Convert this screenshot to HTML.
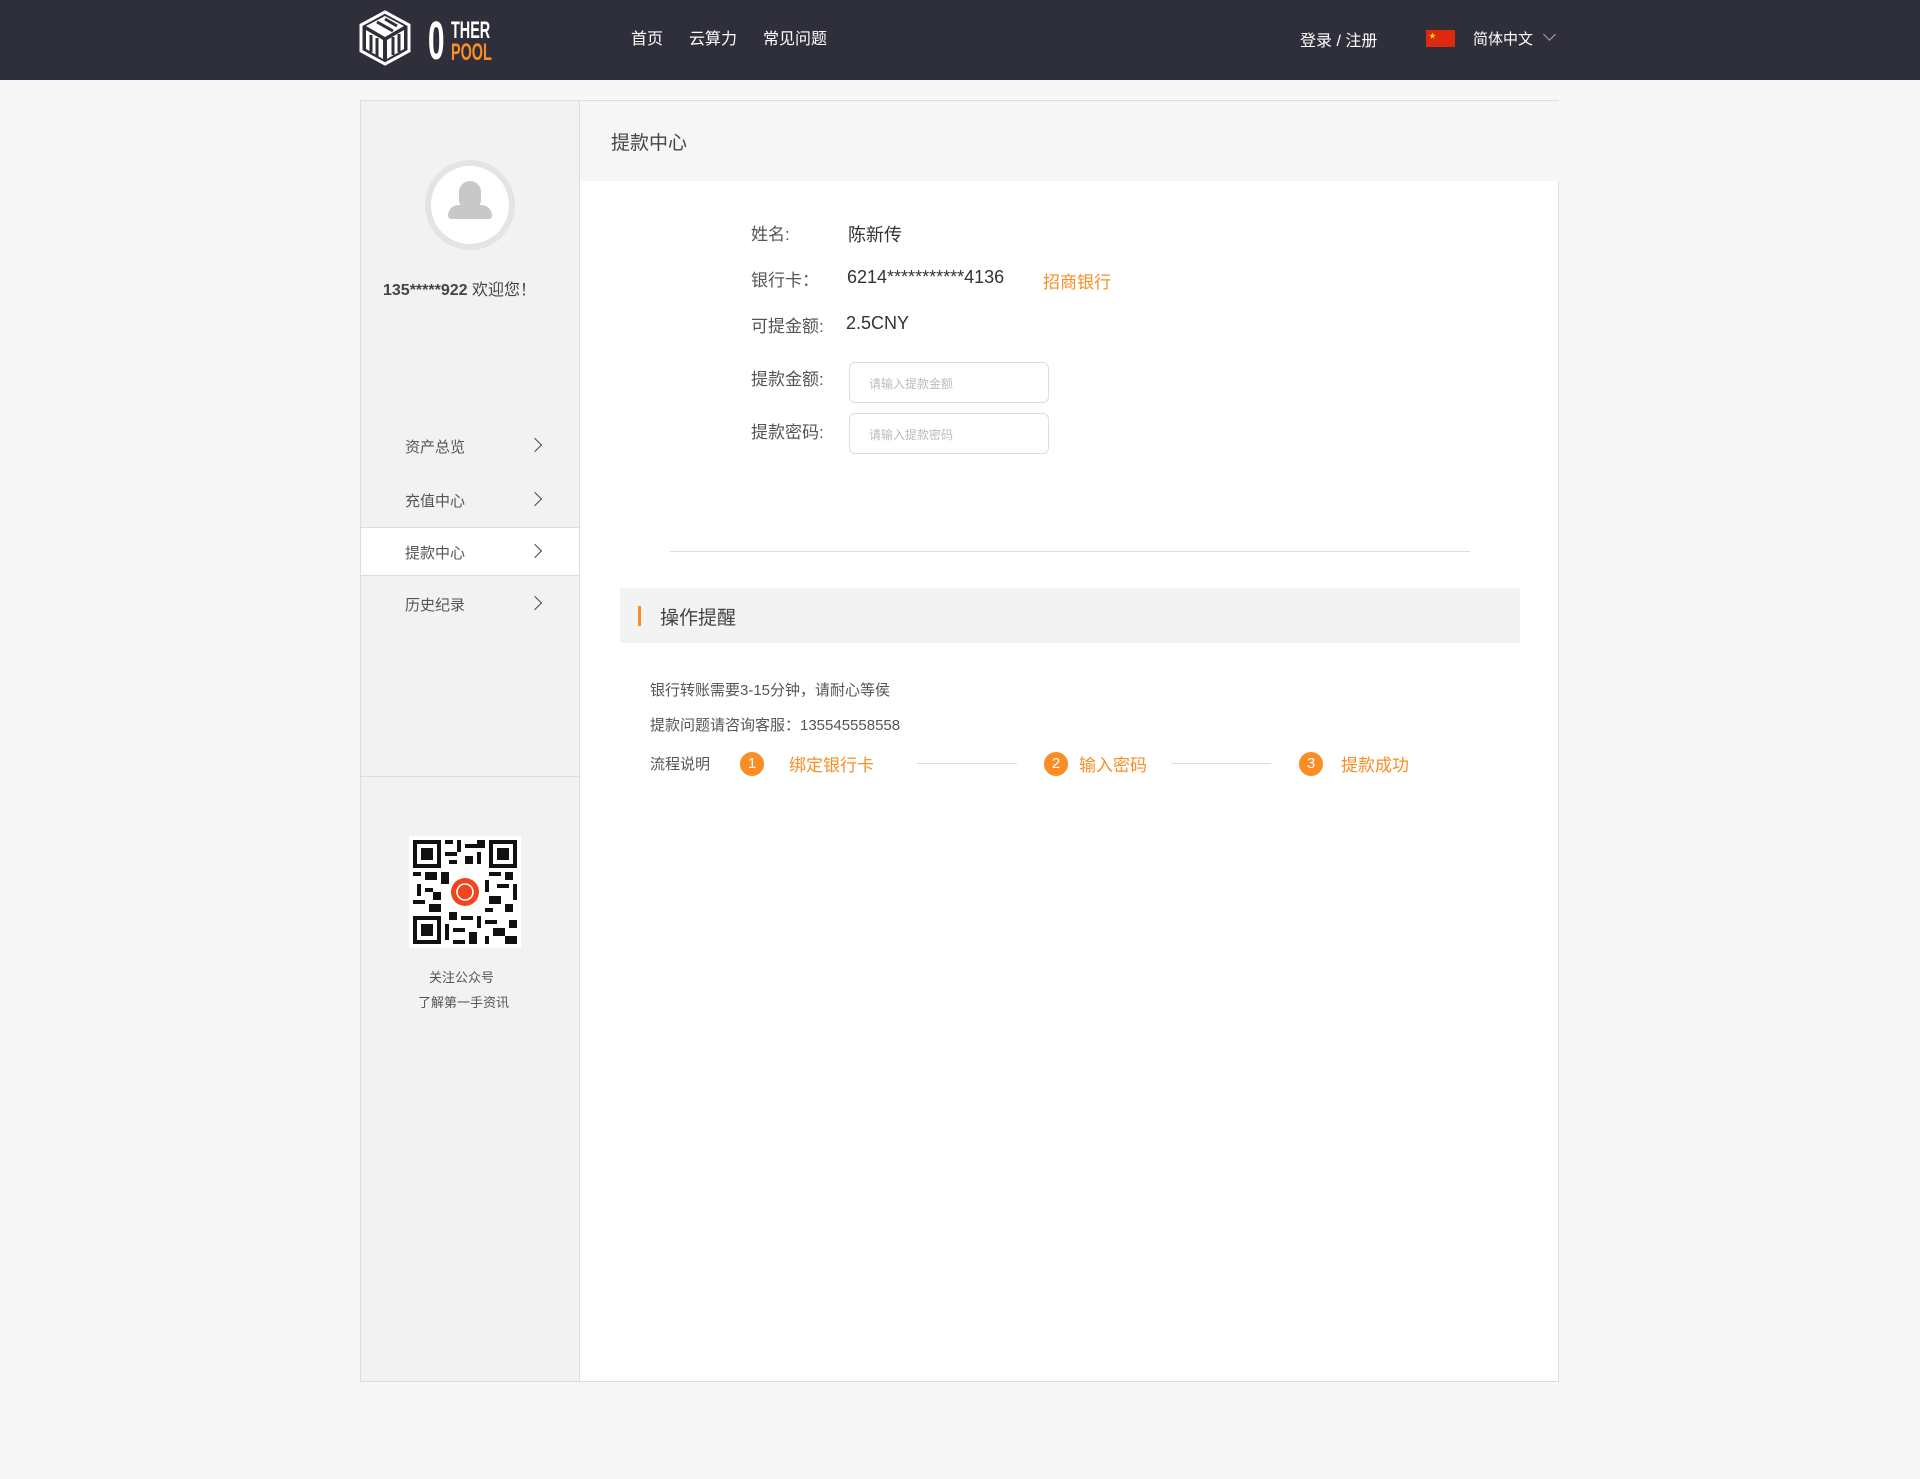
<!DOCTYPE html>
<html><head><meta charset="utf-8"><style>
*{margin:0;padding:0;box-sizing:border-box}
body{width:1920px;height:1479px;background:#f7f7f7;font-family:"Liberation Sans","Noto Sans CJK SC",sans-serif;position:relative;overflow:hidden;color:#333}
.a{position:absolute;white-space:nowrap}
.hdr{position:absolute;left:0;top:0;width:1920px;height:80px;background:#2e2f3a}
.nav{color:#fff;font-size:16px;top:25px}
.box{position:absolute;left:360px;top:100px;width:1199px;height:1282px;border:1px solid #ddd;background:#fff}
.side{position:absolute;left:0;top:0;width:219px;height:100%;background:#f2f2f2;border-right:1px solid #ddd}
.mi{position:absolute;left:0;width:218px;height:48px;font-size:15px;color:#555}
.mi span{position:absolute;left:44px;top:14px}
.mi i{position:absolute;left:169px;top:18px;width:10px;height:10px;border-top:1.5px solid #444;border-right:1.5px solid #444;transform:rotate(45deg)}
.lbl{font-size:17px;color:#555}
.val{font-size:18px;color:#333}
.inp{position:absolute;width:200px;height:41px;border:1px solid #ddd;border-radius:6px;background:#fff;font-size:12px;color:#bbb;padding:12px 0 0 19px}
.c{position:absolute;width:24px;height:24px;border-radius:50%;background:#f98e25;color:#fff;font-size:15px;text-align:center;line-height:24px}
.or{color:#f98e25;font-size:17px}
.ln{position:absolute;height:1px;background:#ddd;top:763px}
</style></head><body>
<div class="hdr"></div>
<svg class="a" style="left:357px;top:10px" width="56" height="56" viewBox="0 0 56 56"><path d="M28 2 L52 15 L52 41 L28 54 L4 41 L4 15Z" fill="none" stroke="#fff" stroke-width="3"/><path d="M28 6 L47 16 L28 27 L9 16Z" fill="#fff"/><path d="M9 20 L26 30 L26 49 L9 39Z" fill="#fff"/><path d="M30 30 L47 20 L47 39 L30 49Z" fill="#fff"/><path d="M20 12 L36 21 M28 9 L40 16 M14 25 L14 42 M20 28 L20 46 M36 27 L36 45 M42 24 L42 42" stroke="#2e2f3a" stroke-width="3"/></svg>
<div class="a" style="left:428px;top:14px;font:bold 54px/54px 'Liberation Sans Narrow','Liberation Sans',sans-serif;color:#fff;transform:scaleX(0.55);transform-origin:left">0</div>
<div class="a" style="left:451px;top:19px;font:bold 24px/24px 'Liberation Sans Narrow','Liberation Sans',sans-serif;color:#fff;transform:scaleX(0.6);transform-origin:left">THER</div>
<div class="a" style="left:451px;top:41px;font:bold 24px/24px 'Liberation Sans Narrow','Liberation Sans',sans-serif;color:#f98e25;transform:scaleX(0.6);transform-origin:left">POOL</div>
<div class="a nav" style="left:631px">首页</div>
<div class="a nav" style="left:689px">云算力</div>
<div class="a nav" style="left:763px">常见问题</div>
<div class="a nav" style="left:1300px;top:27px">登录 / 注册</div>
<div class="a" style="left:1426px;top:30px;width:29px;height:17px;background:#de2910"><span style="position:absolute;left:3px;top:1px;color:#ffde00;font-size:7px">★</span></div>
<div class="a nav" style="left:1473px;top:28px;font-size:15px">简体中文</div>
<div class="a" style="left:1545px;top:30px;width:9px;height:9px;border-right:1px solid #aaa;border-bottom:1px solid #aaa;transform:rotate(45deg)"></div>

<div class="box">
 <div class="side">
  <div class="a" style="left:64px;top:59px;width:90px;height:90px;border-radius:50%;background:#fff;border:6px solid #e4e4e4"></div>
  <div class="a" style="left:98px;top:80px;width:22px;height:28px;border-radius:11px 11px 9px 9px;background:#c8c8c8"></div>
  <div class="a" style="left:87px;top:104px;width:44px;height:14px;border-radius:12px 12px 4px 4px;background:#c8c8c8"></div>
  <div class="a" style="left:22px;top:175px;font-size:16px;color:#444"><b>135*****922</b> 欢迎您！</div>
  <div class="mi" style="top:321px"><span>资产总览</span><i></i></div>
  <div class="mi" style="top:375px"><span>充值中心</span><i></i></div>
  <div class="mi" style="top:426px;background:#fff;border-top:1px solid #ddd;border-bottom:1px solid #ddd;height:49px"><span style="top:14px">提款中心</span><i></i></div>
  <div class="mi" style="top:479px"><span>历史纪录</span><i></i></div>
  <div class="a" style="left:0;top:675px;width:218px;height:1px;background:#ddd"></div>
  <svg class="a" style="left:48px;top:735px" width="112" height="112" viewBox="0 0 28 28"><rect width="28" height="28" fill="#fff"/><g fill="#111">
  <path d="M1 1h7v7h-7zM2 2v5h5v-5zM3 3h3v3h-3z" fill-rule="evenodd"/><path d="M20 1h7v7h-7zM21 2v5h5v-5zM22 3h3v3h-3z" fill-rule="evenodd"/><path d="M1 20h7v7h-7zM2 21v5h5v-5zM3 22h3v3h-3z" fill-rule="evenodd"/>
  <rect x="9" y="1" width="2" height="1"/><rect x="12" y="1" width="1" height="3"/><rect x="14" y="2" width="3" height="1"/><rect x="17" y="1" width="2" height="2"/><rect x="9" y="4" width="3" height="1"/><rect x="14" y="5" width="2" height="2"/><rect x="17" y="4" width="1" height="3"/><rect x="10" y="6" width="2" height="1"/><rect x="1" y="9" width="2" height="1"/><rect x="4" y="9" width="3" height="2"/><rect x="8" y="9" width="2" height="3"/><rect x="2" y="12" width="1" height="3"/><rect x="4" y="13" width="2" height="1"/><rect x="6" y="14" width="2" height="2"/><rect x="1" y="16" width="3" height="1"/><rect x="5" y="17" width="3" height="2"/><rect x="20" y="9" width="3" height="1"/><rect x="24" y="9" width="2" height="2"/><rect x="19" y="11" width="1" height="3"/><rect x="22" y="12" width="3" height="1"/><rect x="26" y="12" width="1" height="4"/><rect x="20" y="15" width="3" height="2"/><rect x="24" y="17" width="2" height="2"/><rect x="19" y="18" width="2" height="1"/><rect x="10" y="19" width="2" height="2"/><rect x="13" y="20" width="3" height="1"/><rect x="17" y="20" width="1" height="3"/><rect x="9" y="22" width="1" height="4"/><rect x="11" y="23" width="3" height="1"/><rect x="15" y="24" width="2" height="3"/><rect x="19" y="21" width="3" height="1"/><rect x="21" y="23" width="3" height="2"/><rect x="25" y="21" width="2" height="2"/><rect x="19" y="25" width="1" height="2"/><rect x="24" y="25" width="3" height="2"/><rect x="11" y="26" width="3" height="1"/></g>
  <rect x="10" y="10" width="8" height="8" fill="#fff"/><circle cx="14" cy="14" r="3.5" fill="#f0451e"/><circle cx="14" cy="14" r="2" fill="none" stroke="#fff" stroke-width="0.4"/></svg>
  <div class="a" style="left:68px;top:866px;font-size:13px;color:#555">关注公众号</div>
  <div class="a" style="left:57px;top:891px;font-size:13px;color:#555">了解第一手资讯</div>
 </div>
 <div class="a" style="left:219px;top:0;width:979px;height:80px;background:#f6f6f6"></div>
 <div class="a" style="left:250px;top:27px;font-size:19px;color:#444">提款中心</div>
</div>
<div class="a lbl" style="left:751px;top:220px">姓名:</div><div class="a val" style="left:848px;top:221px">陈新传</div>
<div class="a lbl" style="left:751px;top:266px">银行卡：</div><div class="a val" style="left:847px;top:267px">6214***********4136</div><div class="a or" style="left:1043px;top:268px">招商银行</div>
<div class="a lbl" style="left:751px;top:312px">可提金额:</div><div class="a val" style="left:846px;top:313px">2.5CNY</div>
<div class="a lbl" style="left:751px;top:365px">提款金额:</div><div class="inp" style="left:849px;top:362px">请输入提款金额</div>
<div class="a lbl" style="left:751px;top:418px">提款密码:</div><div class="inp" style="left:849px;top:413px">请输入提款密码</div>
<div class="a" style="left:670px;top:551px;width:800px;height:1px;background:#ddd"></div>
<div class="a" style="left:620px;top:588px;width:900px;height:55px;background:#f3f3f3"></div>
<div class="a" style="left:638px;top:606px;width:3px;height:20px;background:#f98e25"></div>
<div class="a" style="left:660px;top:603px;font-size:19px;color:#444">操作提醒</div>
<div class="a" style="left:650px;top:679px;font-size:15px;color:#555">银行转账需要3-15分钟，请耐心等侯</div>
<div class="a" style="left:650px;top:714px;font-size:15px;color:#555">提款问题请咨询客服：135545558558</div>
<div class="a" style="left:650px;top:753px;font-size:15px;color:#555">流程说明</div>
<div class="c" style="left:740px;top:752px">1</div><div class="a or" style="left:789px;top:751px">绑定银行卡</div>
<div class="ln" style="left:917px;width:100px"></div>
<div class="c" style="left:1044px;top:752px">2</div><div class="a or" style="left:1079px;top:751px">输入密码</div>
<div class="ln" style="left:1171px;width:100px"></div>
<div class="c" style="left:1299px;top:752px">3</div><div class="a or" style="left:1341px;top:751px">提款成功</div>
</body></html>
